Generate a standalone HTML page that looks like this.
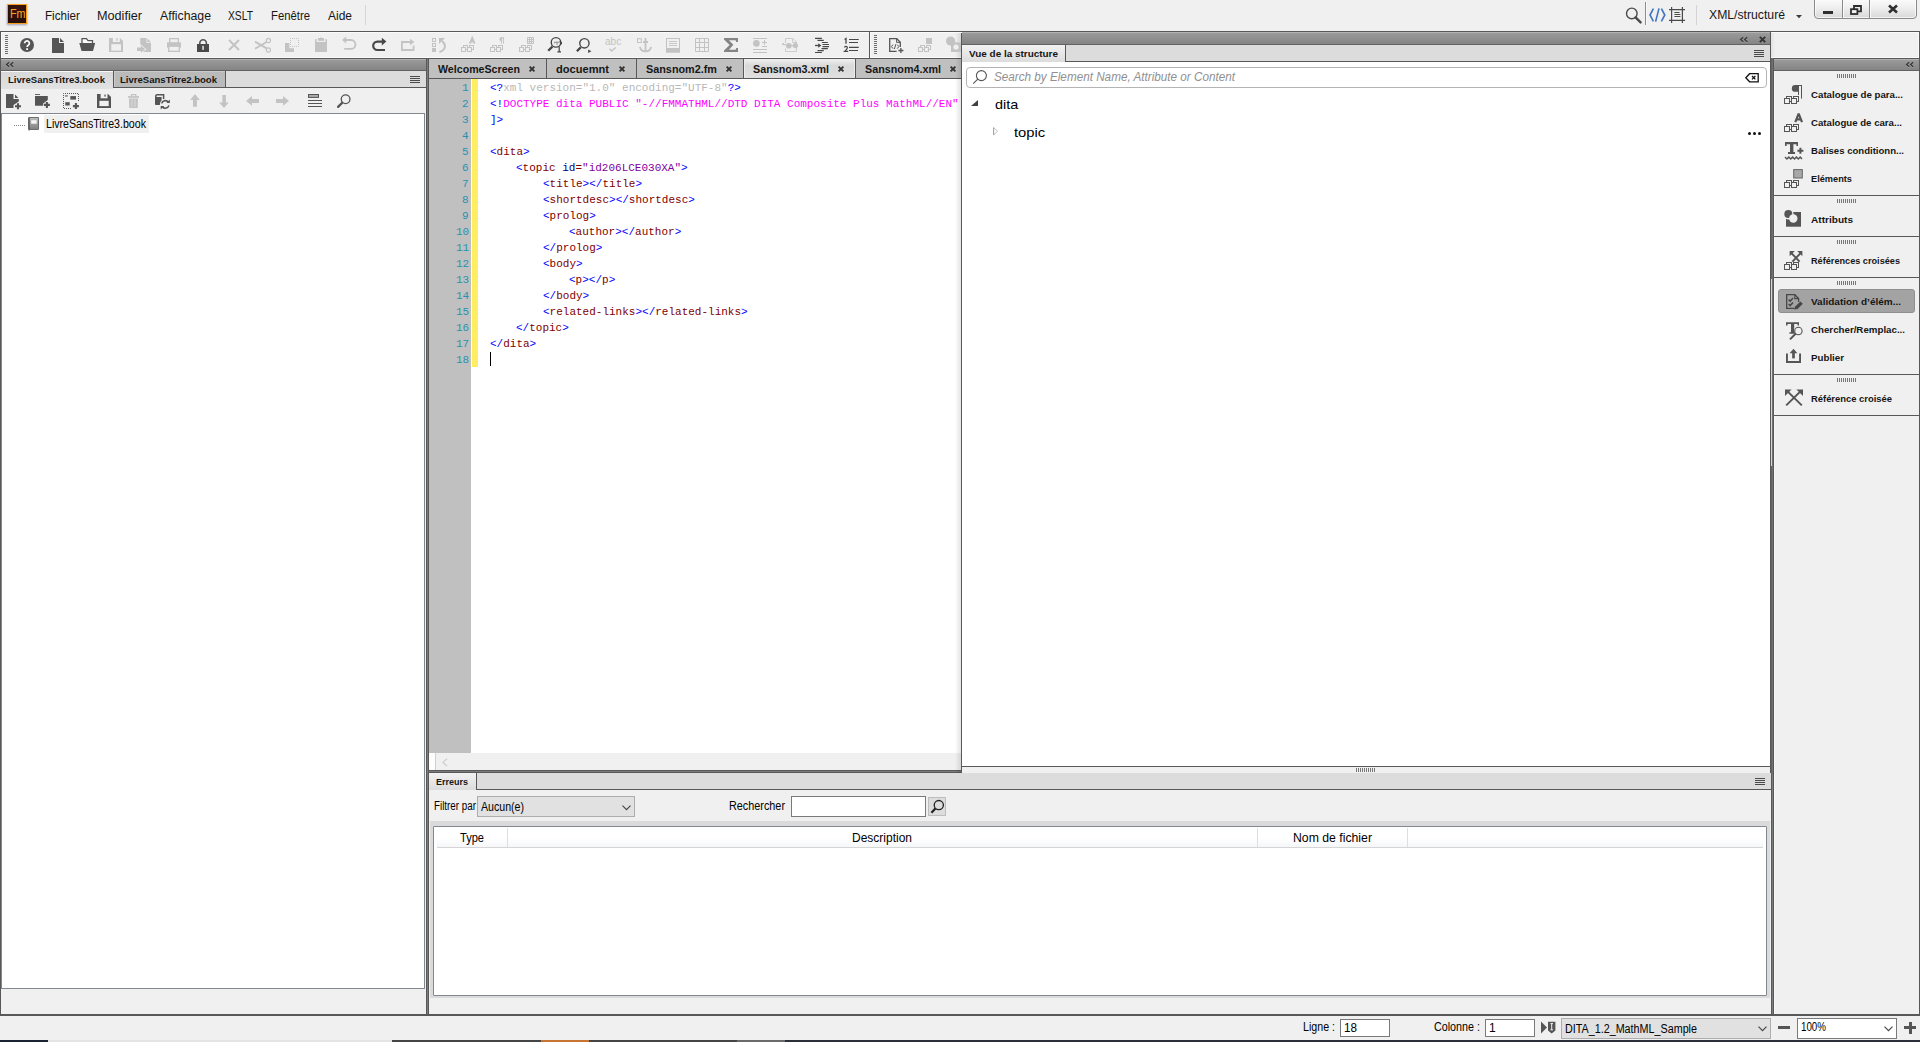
<!DOCTYPE html>
<html lang="fr"><head><meta charset="utf-8"><title>Adobe FrameMaker</title>
<style>
html,body{margin:0;padding:0;}
body{width:1920px;height:1042px;overflow:hidden;background:#f0f0f0;position:relative;font-family:"Liberation Sans",sans-serif;}
body div,body svg{position:absolute;box-sizing:border-box;}
svg{overflow:visible;}
.tx{margin:0;padding:0;}
.code span{position:static;}
</style></head>
<body>
<div style="left:365px;top:5px;width:1px;height:20px;background:#d6d6d6;"></div>
<div style="left:1645px;top:2px;width:1px;height:23px;background:#8c8c8c;"></div>
<div style="left:1646px;top:2px;width:1px;height:23px;background:#fafafa;"></div>
<div style="left:1696px;top:5px;width:1px;height:20px;background:#d4d4d4;"></div>
<div style="left:1814px;top:-3px;width:103px;height:22px;background:linear-gradient(#fdfdfd,#f0f0f0 45%,#d9d9d9);border:1px solid #8a8a8a;border-radius:0 0 4px 4px;box-shadow:inset 0 0 0 1px rgba(255,255,255,.7);"></div>
<div style="left:1842px;top:0px;width:1px;height:18px;background:#8a8a8a;"></div>
<div style="left:1843px;top:0px;width:1px;height:18px;background:#fafafa;"></div>
<div style="left:1869px;top:0px;width:1px;height:18px;background:#8a8a8a;"></div>
<div style="left:1870px;top:0px;width:1px;height:18px;background:#fafafa;"></div>
<div style="left:0px;top:31px;width:1920px;height:1px;background:#585858;"></div>
<div style="left:1px;top:32px;width:960px;height:1px;background:#fbfbfb;"></div>
<div style="left:0px;top:31px;width:1px;height:28px;background:#585858;"></div>
<div style="left:1px;top:32px;width:1px;height:26px;background:#fbfbfb;"></div>
<div style="left:1px;top:57px;width:960px;height:1px;background:#fbfbfb;"></div>
<div style="left:0px;top:58px;width:1920px;height:1px;background:#585858;"></div>
<div style="left:869px;top:32px;width:1px;height:26px;background:#585858;"></div>
<div style="left:870px;top:32px;width:1px;height:26px;background:#fbfbfb;"></div>
<div style="left:5px;top:35px;width:3px;height:19px;background:repeating-linear-gradient(#6e6e6e 0 1px,transparent 1px 2px);"></div>
<div style="left:874px;top:35px;width:3px;height:19px;background:repeating-linear-gradient(#6e6e6e 0 1px,transparent 1px 2px);"></div>
<div style="left:1771px;top:32px;width:149px;height:1px;background:#fbfbfb;"></div>
<div style="left:1771px;top:57px;width:149px;height:1px;background:#fbfbfb;"></div>
<div style="left:1771px;top:33px;width:4px;height:24px;background:linear-gradient(90deg,#e2e2e2,#f0f0f0);"></div>
<div style="left:0px;top:59px;width:1px;height:955px;background:#585858;"></div>
<div style="left:1px;top:59px;width:425px;height:11px;background:linear-gradient(#b2b2b2 0,#b2b2b2 1px,#9a9a9a 1px,#848484 100%);"></div>
<div style="left:0px;top:70px;width:426px;height:1px;background:#626262;"></div>
<div style="left:1px;top:71px;width:425px;height:16px;background:#dcdcdc;"></div>
<div style="left:1px;top:71px;width:112px;height:17.5px;background:linear-gradient(#f8f8f8 0,#f8f8f8 1px,#d8d8d8 1px,#e2e2e2 100%);"></div>
<div style="left:113px;top:71px;width:113px;height:17px;background:#bababa;border:1px solid #585858;border-top:0;box-shadow:inset 1px 1px 0 #cbcbcb;"></div>
<div style="left:226px;top:87px;width:200px;height:1px;background:#585858;"></div>
<div style="left:1px;top:113px;width:424px;height:876px;background:#fff;border:1px solid #828790;"></div>
<div style="left:44px;top:115px;width:105px;height:18px;background:#f0f0f0;"></div>
<div style="left:426px;top:59px;width:1px;height:955px;background:#585858;"></div>
<div style="left:427px;top:59px;width:1px;height:955px;background:#7c7c7c;"></div>
<div style="left:428px;top:59px;width:1px;height:955px;background:#585858;"></div>
<div style="left:429px;top:59px;width:532px;height:19px;background:#c0c0c0;"></div>
<div style="left:546px;top:59px;width:1px;height:19px;background:#585858;"></div>
<div style="left:636px;top:59px;width:1px;height:19px;background:#585858;"></div>
<div style="left:743px;top:59px;width:1px;height:19px;background:#585858;"></div>
<div style="left:855px;top:59px;width:1px;height:19px;background:#585858;"></div>
<div style="left:744px;top:59px;width:111px;height:19px;background:linear-gradient(#f0f0f0,#d9d9d9 35%,#e0e0e0);box-shadow:inset 1px 0 0 #ececec,inset -1px 0 0 #ececec;"></div>
<div style="left:429px;top:78px;width:532px;height:1px;background:#585858;"></div>
<div style="left:429px;top:79px;width:42px;height:674px;background:#c0c0c0;"></div>
<div style="left:471px;top:79px;width:490px;height:674px;background:#fff;"></div>
<div style="left:472px;top:79px;width:6px;height:288px;background:#ffee62;"></div>
<div style="left:490px;top:352px;width:1px;height:14px;background:#000;"></div>
<div style="left:429px;top:753px;width:532px;height:17px;background:#f0f0f0;"></div>
<div style="left:429px;top:753px;width:6px;height:17px;background:#fdfdfd;"></div>
<div style="left:435px;top:753px;width:1px;height:17px;background:#d0d0d0;"></div>
<div style="left:429px;top:770px;width:532px;height:3px;background:#585858;"></div>
<div style="left:429px;top:771px;width:532px;height:1px;background:#7c7c7c;"></div>
<div style="left:955px;top:33px;width:6px;height:740px;background:linear-gradient(90deg,rgba(0,0,0,0),rgba(0,0,0,.11));"></div>
<div style="left:961px;top:31px;width:810px;height:744px;background:#fff;"></div>
<div style="left:961px;top:31px;width:810px;height:1px;background:#585858;"></div>
<div style="left:961px;top:33px;width:1px;height:742px;background:#585858;"></div>
<div style="left:962px;top:32px;width:808px;height:12px;background:linear-gradient(#b2b2b2 0,#b2b2b2 1px,#9a9a9a 1px,#848484 100%);"></div>
<div style="left:962px;top:44px;width:808px;height:1px;background:#626262;"></div>
<div style="left:962px;top:45px;width:808px;height:16px;background:#dcdcdc;"></div>
<div style="left:962px;top:45px;width:103px;height:17px;background:linear-gradient(#f2f2f2,#dcdcdc);"></div>
<div style="left:1065px;top:45px;width:1px;height:17px;background:#585858;"></div>
<div style="left:1065px;top:61px;width:705px;height:1px;background:#585858;"></div>
<div style="left:966px;top:67px;width:801px;height:21px;background:#fff;border:1px solid #b4b4b4;border-radius:4px;"></div>
<div style="left:962px;top:766px;width:808px;height:1px;background:#585858;"></div>
<div style="left:962px;top:767px;width:808px;height:7px;background:#f0f0f0;"></div>
<div style="left:1356px;top:768px;width:19px;height:4px;background:repeating-linear-gradient(90deg,#777 0 1px,transparent 1px 2px);"></div>
<div style="left:961px;top:774px;width:813px;height:1px;background:#585858;"></div>
<div style="left:1770px;top:32px;width:1px;height:743px;background:#585858;"></div>
<div style="left:1771px;top:58px;width:1px;height:717px;background:#636363;"></div>
<div style="left:1772px;top:58px;width:1px;height:717px;background:#727272;"></div>
<div style="left:1773px;top:58px;width:1px;height:717px;background:#585858;"></div>
<div style="left:1771px;top:279px;width:1px;height:187px;background:#d6d6d6;"></div>
<div style="left:1774px;top:59px;width:1px;height:955px;background:#f7f7f7;"></div>
<div style="left:429px;top:773px;width:1342px;height:16px;background:#dcdcdc;"></div>
<div style="left:429px;top:773px;width:47px;height:17px;background:linear-gradient(#f2f2f2,#dcdcdc);"></div>
<div style="left:476px;top:773px;width:1px;height:17px;background:#585858;"></div>
<div style="left:476px;top:789px;width:1295px;height:1px;background:#585858;"></div>
<div style="left:477px;top:796px;width:158px;height:21px;background:#e1e1e1;border:1px solid #adadad;"></div>
<div style="left:791px;top:796px;width:135px;height:21px;background:#fff;border:1px solid #7a7a7a;"></div>
<div style="left:928px;top:797px;width:18px;height:19px;background:#dddddd;border:1px solid #bdbdbd;"></div>
<div style="left:430px;top:821px;width:1340px;height:177px;background:#dadada;"></div>
<div style="left:433px;top:826px;width:1334px;height:170px;background:#fff;border:1px solid #828790;border-radius:1px;"></div>
<div style="left:437px;top:828px;width:1326px;height:19px;background:linear-gradient(#fff,#fff 50%,#f6f7f9);"></div>
<div style="left:437px;top:847px;width:1326px;height:1px;background:#d5d5d5;"></div>
<div style="left:507px;top:828px;width:1px;height:19px;background:#dedede;"></div>
<div style="left:1257px;top:828px;width:1px;height:19px;background:#dedede;"></div>
<div style="left:1407px;top:828px;width:1px;height:19px;background:#dedede;"></div>
<div style="left:1771px;top:775px;width:1px;height:239px;background:#585858;"></div>
<div style="left:1772px;top:775px;width:1px;height:239px;background:#7c7c7c;"></div>
<div style="left:1773px;top:775px;width:1px;height:239px;background:#585858;"></div>
<div style="left:1774px;top:59px;width:146px;height:11px;background:linear-gradient(#b2b2b2 0,#b2b2b2 1px,#9a9a9a 1px,#848484 100%);"></div>
<div style="left:1774px;top:70px;width:146px;height:1px;background:#626262;"></div>
<div style="left:1774px;top:195px;width:146px;height:1px;background:#585858;"></div>
<div style="left:1774px;top:236px;width:146px;height:1px;background:#585858;"></div>
<div style="left:1774px;top:277px;width:146px;height:1px;background:#585858;"></div>
<div style="left:1774px;top:374px;width:146px;height:1px;background:#585858;"></div>
<div style="left:1774px;top:415px;width:146px;height:1px;background:#585858;"></div>
<div style="left:1837px;top:74px;width:19px;height:4px;background:repeating-linear-gradient(90deg,#777 0 1px,transparent 1px 2px);"></div>
<div style="left:1837px;top:199px;width:19px;height:4px;background:repeating-linear-gradient(90deg,#777 0 1px,transparent 1px 2px);"></div>
<div style="left:1837px;top:240px;width:19px;height:4px;background:repeating-linear-gradient(90deg,#777 0 1px,transparent 1px 2px);"></div>
<div style="left:1837px;top:281px;width:19px;height:4px;background:repeating-linear-gradient(90deg,#777 0 1px,transparent 1px 2px);"></div>
<div style="left:1837px;top:378px;width:19px;height:4px;background:repeating-linear-gradient(90deg,#777 0 1px,transparent 1px 2px);"></div>
<div style="left:1778px;top:289px;width:137px;height:24px;background:#a3a3a3;border:1px solid #8f8f8f;border-radius:3px;"></div>
<div style="left:1919px;top:31px;width:1px;height:985px;background:#585858;"></div>
<div style="left:1918px;top:32px;width:1px;height:26px;background:#fbfbfb;"></div>
<div style="left:0px;top:1014px;width:1920px;height:2px;background:#585858;"></div>
<div style="left:1340px;top:1019px;width:50px;height:18px;background:#fff;border:1px solid #7a7a7a;"></div>
<div style="left:1485px;top:1019px;width:50px;height:18px;background:#fff;border:1px solid #7a7a7a;"></div>
<div style="left:1561px;top:1018px;width:210px;height:21px;background:#e1e1e1;border:1px solid #adadad;"></div>
<div style="left:1797px;top:1018px;width:100px;height:21px;background:#fff;border:1px solid #7a7a7a;"></div>
<div style="left:1778px;top:1026px;width:12px;height:3px;background:#555;"></div>
<div style="left:1904px;top:1026px;width:12px;height:3px;background:#555;"></div>
<div style="left:1908.5px;top:1022px;width:3px;height:12px;background:#555;"></div>
<div style="left:0px;top:1040px;width:1920px;height:2px;background:#1b2434;"></div>
<div style="left:48px;top:1040px;width:344px;height:2px;background:#e4e4e4;"></div>
<div style="left:392px;top:1040px;width:149px;height:2px;background:#454545;"></div>
<div style="left:541px;top:1040px;width:48px;height:2px;background:#c87533;"></div>
<div style="left:589px;top:1040px;width:148px;height:2px;background:#454545;"></div>
<div style="left:737px;top:1040px;width:48px;height:2px;background:#6a6a6a;"></div>
<div style="left:785px;top:1040px;width:1135px;height:2px;background:#2a2f3a;"></div>
<div class="tx" id="t1" style="left:45px;top:9.84px;font:400 12px/12px 'Liberation Sans',sans-serif;color:#161616;white-space:pre;transform-origin:0 0;transform:scaleX(0.9718);">Fichier</div>
<div class="tx" id="t2" style="left:97px;top:9.84px;font:400 12px/12px 'Liberation Sans',sans-serif;color:#161616;white-space:pre;transform-origin:0 0;transform:scaleX(1.0542);">Modifier</div>
<div class="tx" id="t3" style="left:160px;top:9.84px;font:400 12px/12px 'Liberation Sans',sans-serif;color:#161616;white-space:pre;transform-origin:0 0;transform:scaleX(1.0235);">Affichage</div>
<div class="tx" id="t4" style="left:228px;top:9.84px;font:400 12px/12px 'Liberation Sans',sans-serif;color:#161616;white-space:pre;transform-origin:0 0;transform:scaleX(0.8584);">XSLT</div>
<div class="tx" id="t5" style="left:271px;top:9.84px;font:400 12px/12px 'Liberation Sans',sans-serif;color:#161616;white-space:pre;transform-origin:0 0;transform:scaleX(0.9430);">Fenêtre</div>
<div class="tx" id="t6" style="left:328px;top:9.84px;font:400 12px/12px 'Liberation Sans',sans-serif;color:#161616;white-space:pre;transform-origin:0 0;transform:scaleX(0.9987);">Aide</div>
<div class="tx" id="t7" style="left:1709px;top:8.84px;font:400 12px/12px 'Liberation Sans',sans-serif;color:#161616;white-space:pre;transform-origin:0 0;transform:scaleX(1.0174);">XML/structuré</div>
<div class="tx" id="t8" style="left:8px;top:74.87px;font:700 9.6px/9.6px 'Liberation Sans',sans-serif;color:#161616;white-space:pre;transform-origin:0 0;transform:scaleX(0.9958);">LivreSansTitre3.book</div>
<div class="tx" id="t9" style="left:120px;top:74.87px;font:700 9.6px/9.6px 'Liberation Sans',sans-serif;color:#161616;white-space:pre;transform-origin:0 0;transform:scaleX(0.9958);">LivreSansTitre2.book</div>
<div class="tx" id="t10" style="left:46px;top:117.84px;font:400 12px/12px 'Liberation Sans',sans-serif;color:#000;white-space:pre;transform-origin:0 0;transform:scaleX(0.8853);">LivreSansTitre3.book</div>
<div class="tx" id="t11" style="left:438px;top:63.69px;font:700 11px/11px 'Liberation Sans',sans-serif;color:#161616;white-space:pre;transform-origin:0 0;transform:scaleX(0.9670);">WelcomeScreen</div>
<div class="tx" id="t12" style="left:556px;top:63.69px;font:700 11px/11px 'Liberation Sans',sans-serif;color:#161616;white-space:pre;transform-origin:0 0;transform:scaleX(1.0083);">docuemnt</div>
<div class="tx" id="t13" style="left:646px;top:63.69px;font:700 11px/11px 'Liberation Sans',sans-serif;color:#161616;white-space:pre;transform-origin:0 0;transform:scaleX(0.9842);">Sansnom2.fm</div>
<div class="tx" id="t14" style="left:753px;top:63.69px;font:700 11px/11px 'Liberation Sans',sans-serif;color:#161616;white-space:pre;transform-origin:0 0;transform:scaleX(0.9789);">Sansnom3.xml</div>
<div class="tx" id="t15" style="left:865px;top:63.69px;font:700 11px/11px 'Liberation Sans',sans-serif;color:#161616;white-space:pre;transform-origin:0 0;transform:scaleX(0.9789);">Sansnom4.xml</div>
<div class="tx" style="left:462.4px;top:82.18px;font:400 11.5px/11.5px 'Liberation Mono',monospace;color:#2b91af;white-space:pre;transform-origin:0 0;transform:scaleX(0.9565);">1</div>
<div class="tx code" style="left:490.0px;top:82.18px;width:492.4px;height:16px;overflow:hidden;font:400 11.5px/11.5px 'Liberation Mono',monospace;white-space:pre;transform-origin:0 0;transform:scaleX(0.9565);"><span style="color:#0000ff">&lt;?</span><span style="color:#b8b8b8">xml version=&quot;1.0&quot; encoding=&quot;UTF-8&quot;</span><span style="color:#0000ff">?&gt;</span></div>
<div class="tx" style="left:462.4px;top:98.18px;font:400 11.5px/11.5px 'Liberation Mono',monospace;color:#2b91af;white-space:pre;transform-origin:0 0;transform:scaleX(0.9565);">2</div>
<div class="tx code" style="left:490.0px;top:98.18px;width:492.4px;height:16px;overflow:hidden;font:400 11.5px/11.5px 'Liberation Mono',monospace;white-space:pre;transform-origin:0 0;transform:scaleX(0.9565);"><span style="color:#0000ff">&lt;!</span><span style="color:#ff00ff">DOCTYPE dita PUBLIC &quot;-//FMMATHML//DTD DITA Composite Plus MathML//EN&quot;</span></div>
<div class="tx" style="left:462.4px;top:114.18px;font:400 11.5px/11.5px 'Liberation Mono',monospace;color:#2b91af;white-space:pre;transform-origin:0 0;transform:scaleX(0.9565);">3</div>
<div class="tx code" style="left:490.0px;top:114.18px;width:492.4px;height:16px;overflow:hidden;font:400 11.5px/11.5px 'Liberation Mono',monospace;white-space:pre;transform-origin:0 0;transform:scaleX(0.9565);"><span style="color:#0000ff">]&gt;</span></div>
<div class="tx" style="left:462.4px;top:130.18px;font:400 11.5px/11.5px 'Liberation Mono',monospace;color:#2b91af;white-space:pre;transform-origin:0 0;transform:scaleX(0.9565);">4</div>
<div class="tx" style="left:462.4px;top:146.18px;font:400 11.5px/11.5px 'Liberation Mono',monospace;color:#2b91af;white-space:pre;transform-origin:0 0;transform:scaleX(0.9565);">5</div>
<div class="tx code" style="left:490.0px;top:146.18px;width:492.4px;height:16px;overflow:hidden;font:400 11.5px/11.5px 'Liberation Mono',monospace;white-space:pre;transform-origin:0 0;transform:scaleX(0.9565);"><span style="color:#0000ff">&lt;</span><span style="color:#800000">dita</span><span style="color:#0000ff">&gt;</span></div>
<div class="tx" style="left:462.4px;top:162.18px;font:400 11.5px/11.5px 'Liberation Mono',monospace;color:#2b91af;white-space:pre;transform-origin:0 0;transform:scaleX(0.9565);">6</div>
<div class="tx code" style="left:516.4px;top:162.18px;width:464.8px;height:16px;overflow:hidden;font:400 11.5px/11.5px 'Liberation Mono',monospace;white-space:pre;transform-origin:0 0;transform:scaleX(0.9565);"><span style="color:#0000ff">&lt;</span><span style="color:#800000">topic</span><span style="color:#800000"> </span><span style="color:#000080">id</span><span style="color:#800000">=</span><span style="color:#8000a0">&quot;id206LCE030XA&quot;</span><span style="color:#0000ff">&gt;</span></div>
<div class="tx" style="left:462.4px;top:178.18px;font:400 11.5px/11.5px 'Liberation Mono',monospace;color:#2b91af;white-space:pre;transform-origin:0 0;transform:scaleX(0.9565);">7</div>
<div class="tx code" style="left:542.8px;top:178.18px;width:437.2px;height:16px;overflow:hidden;font:400 11.5px/11.5px 'Liberation Mono',monospace;white-space:pre;transform-origin:0 0;transform:scaleX(0.9565);"><span style="color:#0000ff">&lt;</span><span style="color:#800000">title</span><span style="color:#0000ff">&gt;</span><span style="color:#0000ff">&lt;/</span><span style="color:#800000">title</span><span style="color:#0000ff">&gt;</span></div>
<div class="tx" style="left:462.4px;top:194.18px;font:400 11.5px/11.5px 'Liberation Mono',monospace;color:#2b91af;white-space:pre;transform-origin:0 0;transform:scaleX(0.9565);">8</div>
<div class="tx code" style="left:542.8px;top:194.18px;width:437.2px;height:16px;overflow:hidden;font:400 11.5px/11.5px 'Liberation Mono',monospace;white-space:pre;transform-origin:0 0;transform:scaleX(0.9565);"><span style="color:#0000ff">&lt;</span><span style="color:#800000">shortdesc</span><span style="color:#0000ff">&gt;</span><span style="color:#0000ff">&lt;/</span><span style="color:#800000">shortdesc</span><span style="color:#0000ff">&gt;</span></div>
<div class="tx" style="left:462.4px;top:210.18px;font:400 11.5px/11.5px 'Liberation Mono',monospace;color:#2b91af;white-space:pre;transform-origin:0 0;transform:scaleX(0.9565);">9</div>
<div class="tx code" style="left:542.8px;top:210.18px;width:437.2px;height:16px;overflow:hidden;font:400 11.5px/11.5px 'Liberation Mono',monospace;white-space:pre;transform-origin:0 0;transform:scaleX(0.9565);"><span style="color:#0000ff">&lt;</span><span style="color:#800000">prolog</span><span style="color:#0000ff">&gt;</span></div>
<div class="tx" style="left:455.8px;top:226.18px;font:400 11.5px/11.5px 'Liberation Mono',monospace;color:#2b91af;white-space:pre;transform-origin:0 0;transform:scaleX(0.9565);">10</div>
<div class="tx code" style="left:569.2px;top:226.18px;width:409.6px;height:16px;overflow:hidden;font:400 11.5px/11.5px 'Liberation Mono',monospace;white-space:pre;transform-origin:0 0;transform:scaleX(0.9565);"><span style="color:#0000ff">&lt;</span><span style="color:#800000">author</span><span style="color:#0000ff">&gt;</span><span style="color:#0000ff">&lt;/</span><span style="color:#800000">author</span><span style="color:#0000ff">&gt;</span></div>
<div class="tx" style="left:455.8px;top:242.18px;font:400 11.5px/11.5px 'Liberation Mono',monospace;color:#2b91af;white-space:pre;transform-origin:0 0;transform:scaleX(0.9565);">11</div>
<div class="tx code" style="left:542.8px;top:242.18px;width:437.2px;height:16px;overflow:hidden;font:400 11.5px/11.5px 'Liberation Mono',monospace;white-space:pre;transform-origin:0 0;transform:scaleX(0.9565);"><span style="color:#0000ff">&lt;/</span><span style="color:#800000">prolog</span><span style="color:#0000ff">&gt;</span></div>
<div class="tx" style="left:455.8px;top:258.18px;font:400 11.5px/11.5px 'Liberation Mono',monospace;color:#2b91af;white-space:pre;transform-origin:0 0;transform:scaleX(0.9565);">12</div>
<div class="tx code" style="left:542.8px;top:258.18px;width:437.2px;height:16px;overflow:hidden;font:400 11.5px/11.5px 'Liberation Mono',monospace;white-space:pre;transform-origin:0 0;transform:scaleX(0.9565);"><span style="color:#0000ff">&lt;</span><span style="color:#800000">body</span><span style="color:#0000ff">&gt;</span></div>
<div class="tx" style="left:455.8px;top:274.18px;font:400 11.5px/11.5px 'Liberation Mono',monospace;color:#2b91af;white-space:pre;transform-origin:0 0;transform:scaleX(0.9565);">13</div>
<div class="tx code" style="left:569.2px;top:274.18px;width:409.6px;height:16px;overflow:hidden;font:400 11.5px/11.5px 'Liberation Mono',monospace;white-space:pre;transform-origin:0 0;transform:scaleX(0.9565);"><span style="color:#0000ff">&lt;</span><span style="color:#800000">p</span><span style="color:#0000ff">&gt;</span><span style="color:#0000ff">&lt;/</span><span style="color:#800000">p</span><span style="color:#0000ff">&gt;</span></div>
<div class="tx" style="left:455.8px;top:290.18px;font:400 11.5px/11.5px 'Liberation Mono',monospace;color:#2b91af;white-space:pre;transform-origin:0 0;transform:scaleX(0.9565);">14</div>
<div class="tx code" style="left:542.8px;top:290.18px;width:437.2px;height:16px;overflow:hidden;font:400 11.5px/11.5px 'Liberation Mono',monospace;white-space:pre;transform-origin:0 0;transform:scaleX(0.9565);"><span style="color:#0000ff">&lt;/</span><span style="color:#800000">body</span><span style="color:#0000ff">&gt;</span></div>
<div class="tx" style="left:455.8px;top:306.18px;font:400 11.5px/11.5px 'Liberation Mono',monospace;color:#2b91af;white-space:pre;transform-origin:0 0;transform:scaleX(0.9565);">15</div>
<div class="tx code" style="left:542.8px;top:306.18px;width:437.2px;height:16px;overflow:hidden;font:400 11.5px/11.5px 'Liberation Mono',monospace;white-space:pre;transform-origin:0 0;transform:scaleX(0.9565);"><span style="color:#0000ff">&lt;</span><span style="color:#800000">related-links</span><span style="color:#0000ff">&gt;</span><span style="color:#0000ff">&lt;/</span><span style="color:#800000">related-links</span><span style="color:#0000ff">&gt;</span></div>
<div class="tx" style="left:455.8px;top:322.18px;font:400 11.5px/11.5px 'Liberation Mono',monospace;color:#2b91af;white-space:pre;transform-origin:0 0;transform:scaleX(0.9565);">16</div>
<div class="tx code" style="left:516.4px;top:322.18px;width:464.8px;height:16px;overflow:hidden;font:400 11.5px/11.5px 'Liberation Mono',monospace;white-space:pre;transform-origin:0 0;transform:scaleX(0.9565);"><span style="color:#0000ff">&lt;/</span><span style="color:#800000">topic</span><span style="color:#0000ff">&gt;</span></div>
<div class="tx" style="left:455.8px;top:338.18px;font:400 11.5px/11.5px 'Liberation Mono',monospace;color:#2b91af;white-space:pre;transform-origin:0 0;transform:scaleX(0.9565);">17</div>
<div class="tx code" style="left:490.0px;top:338.18px;width:492.4px;height:16px;overflow:hidden;font:400 11.5px/11.5px 'Liberation Mono',monospace;white-space:pre;transform-origin:0 0;transform:scaleX(0.9565);"><span style="color:#0000ff">&lt;/</span><span style="color:#800000">dita</span><span style="color:#0000ff">&gt;</span></div>
<div class="tx" style="left:455.8px;top:354.18px;font:400 11.5px/11.5px 'Liberation Mono',monospace;color:#2b91af;white-space:pre;transform-origin:0 0;transform:scaleX(0.9565);">18</div>
<div class="tx" id="t16" style="left:969px;top:48.87px;font:700 9.6px/9.6px 'Liberation Sans',sans-serif;color:#161616;white-space:pre;transform-origin:0 0;transform:scaleX(1.0347);">Vue de la structure</div>
<div class="tx" id="t17" style="left:994px;top:71.14px;font:italic 400 12px/12px 'Liberation Sans',sans-serif;color:#909090;white-space:pre;transform-origin:0 0;transform:scaleX(0.9756);">Search by Element Name, Attribute or Content</div>
<div class="tx" id="t18" style="left:995px;top:97.57px;font:400 13.5px/13.5px 'Liberation Sans',sans-serif;color:#000;white-space:pre;transform-origin:0 0;transform:scaleX(1.0697);">dita</div>
<div class="tx" id="t19" style="left:1014px;top:125.57px;font:400 13.5px/13.5px 'Liberation Sans',sans-serif;color:#000;white-space:pre;transform-origin:0 0;transform:scaleX(1.0935);">topic</div>
<div class="tx" id="t20" style="left:436px;top:776.87px;font:700 9.6px/9.6px 'Liberation Sans',sans-serif;color:#161616;white-space:pre;transform-origin:0 0;transform:scaleX(0.9373);">Erreurs</div>
<div class="tx" id="t21" style="left:434px;top:799.84px;font:400 12px/12px 'Liberation Sans',sans-serif;color:#000;white-space:pre;transform-origin:0 0;transform:scaleX(0.8180);">Filtrer par</div>
<div class="tx" id="t22" style="left:481px;top:800.84px;font:400 12px/12px 'Liberation Sans',sans-serif;color:#000;white-space:pre;transform-origin:0 0;transform:scaleX(0.8829);">Aucun(e)</div>
<div class="tx" id="t23" style="left:729px;top:799.84px;font:400 12px/12px 'Liberation Sans',sans-serif;color:#000;white-space:pre;transform-origin:0 0;transform:scaleX(0.9028);">Rechercher</div>
<div class="tx" id="t24" style="left:460px;top:831.84px;font:400 12px/12px 'Liberation Sans',sans-serif;color:#000;white-space:pre;transform-origin:0 0;transform:scaleX(0.9225);">Type</div>
<div class="tx" id="t25" style="left:852px;top:831.84px;font:400 12px/12px 'Liberation Sans',sans-serif;color:#000;white-space:pre;transform-origin:0 0;transform:scaleX(0.9995);">Description</div>
<div class="tx" id="t26" style="left:1293px;top:831.84px;font:400 12px/12px 'Liberation Sans',sans-serif;color:#000;white-space:pre;transform-origin:0 0;transform:scaleX(1.0210);">Nom de fichier</div>
<div class="tx" id="t27" style="left:1811px;top:89.87px;font:700 9.6px/9.6px 'Liberation Sans',sans-serif;color:#161616;white-space:pre;transform-origin:0 0;transform:scaleX(1.0091);">Catalogue de para...</div>
<div class="tx" id="t28" style="left:1811px;top:117.87px;font:700 9.6px/9.6px 'Liberation Sans',sans-serif;color:#161616;white-space:pre;transform-origin:0 0;transform:scaleX(1.0040);">Catalogue de cara...</div>
<div class="tx" id="t29" style="left:1811px;top:145.87px;font:700 9.6px/9.6px 'Liberation Sans',sans-serif;color:#161616;white-space:pre;transform-origin:0 0;transform:scaleX(0.9968);">Balises conditionn...</div>
<div class="tx" id="t30" style="left:1811px;top:173.87px;font:700 9.6px/9.6px 'Liberation Sans',sans-serif;color:#161616;white-space:pre;transform-origin:0 0;transform:scaleX(0.9608);">Eléments</div>
<div class="tx" id="t31" style="left:1811px;top:214.87px;font:700 9.6px/9.6px 'Liberation Sans',sans-serif;color:#161616;white-space:pre;transform-origin:0 0;transform:scaleX(1.0508);">Attributs</div>
<div class="tx" id="t32" style="left:1811px;top:255.87px;font:700 9.6px/9.6px 'Liberation Sans',sans-serif;color:#161616;white-space:pre;transform-origin:0 0;transform:scaleX(0.9535);">Références croisées</div>
<div class="tx" id="t33" style="left:1811px;top:296.87px;font:700 9.6px/9.6px 'Liberation Sans',sans-serif;color:#161616;white-space:pre;transform-origin:0 0;transform:scaleX(1.0420);">Validation d’élém...</div>
<div class="tx" id="t34" style="left:1811px;top:324.87px;font:700 9.6px/9.6px 'Liberation Sans',sans-serif;color:#161616;white-space:pre;transform-origin:0 0;transform:scaleX(1.0131);">Chercher/Remplac...</div>
<div class="tx" id="t35" style="left:1811px;top:352.87px;font:700 9.6px/9.6px 'Liberation Sans',sans-serif;color:#161616;white-space:pre;transform-origin:0 0;transform:scaleX(1.0144);">Publier</div>
<div class="tx" id="t36" style="left:1811px;top:393.87px;font:700 9.6px/9.6px 'Liberation Sans',sans-serif;color:#161616;white-space:pre;transform-origin:0 0;transform:scaleX(0.9798);">Référence croisée</div>
<div class="tx" id="t37" style="left:1303px;top:1020.84px;font:400 12px/12px 'Liberation Sans',sans-serif;color:#000;white-space:pre;transform-origin:0 0;transform:scaleX(0.8881);">Ligne :</div>
<div class="tx" id="t38" style="left:1344px;top:1021.84px;font:400 12px/12px 'Liberation Sans',sans-serif;color:#000;white-space:pre;transform-origin:0 0;transform:scaleX(0.9731);">18</div>
<div class="tx" id="t39" style="left:1434px;top:1020.84px;font:400 12px/12px 'Liberation Sans',sans-serif;color:#000;white-space:pre;transform-origin:0 0;transform:scaleX(0.8954);">Colonne :</div>
<div class="tx" id="t40" style="left:1489px;top:1021.84px;font:400 12px/12px 'Liberation Sans',sans-serif;color:#000;white-space:pre;transform-origin:0 0;transform:scaleX(1.0000);">1</div>
<div class="tx" id="t41" style="left:1565px;top:1022.84px;font:400 12px/12px 'Liberation Sans',sans-serif;color:#000;white-space:pre;transform-origin:0 0;transform:scaleX(0.8968);">DITA_1.2_MathML_Sample</div>
<div class="tx" id="t42" style="left:1801px;top:1021.34px;font:400 12px/12px 'Liberation Sans',sans-serif;color:#000;white-space:pre;transform-origin:0 0;transform:scaleX(0.8142);">100%</div>
<div style="left:7px;top:4px;width:20px;height:20px;background:radial-gradient(circle at 50% 20%,#3a1610,#260c08);border:1px solid #f7a022;box-shadow:0 1px 2px rgba(0,0,60,.35);"></div>
<div class="tx" id="logo" style="left:9.8px;top:8.44px;font:400 12px/12px 'Liberation Sans',sans-serif;color:#f9a526;white-space:pre;transform-origin:0 0;transform:scaleX(0.9003);">Fm</div>
<svg style="left:20px;top:38px;" width="14" height="14" viewBox="0 0 14 14"><circle cx="7" cy="7" r="7" fill="#555555"/><path d="M4.6 5.2 a2.4 2.3 0 1 1 3.6 2 q-1.1 .7 -1.1 1.9" fill="none" stroke="#fff" stroke-width="1.7"/><rect x="6.2" y="10.2" width="1.8" height="1.8" fill="#fff"/></svg>
<svg style="left:52px;top:38px;" width="12" height="15" viewBox="0 0 12 15"><path d="M0 0H7V5H12V15H0Z" fill="#555555"/><path d="M8 0L12 4H8Z" fill="#555555"/></svg>
<svg style="left:79px;top:38px;" width="17" height="13" viewBox="0 0 17 13"><path d="M3 5V.7H7.5L9 2.6H13.5V5" fill="#fff" stroke="#555555" stroke-width="1.3"/><path d="M.3 5H16.2L14 13H2.5Z" fill="#555555"/></svg>
<svg style="left:109px;top:38px;" width="14" height="14" viewBox="0 0 14 14"><path d="M0 0H11L14 3V14H0Z" fill="#c3c3c3"/><rect x="2.3" y="6.2" width="9.7" height="6.5" fill="#f0f0f0"/><rect x="3.9" y="0" width="6.9" height="4" fill="#f0f0f0"/><rect x="7.25" y="0" width="1.3" height="2.8" fill="#c3c3c3"/></svg>
<svg style="left:137px;top:38px;" width="15" height="16" viewBox="0 0 15 16"><path d="M3.3 0H9.5V5H14V14H3.3Z" fill="#c3c3c3"/><path d="M10.4 .6L14 4.2H10.4Z" fill="#c3c3c3"/><path d="M0 9.6H4V7.8L8.2 11.3 4 14.8V12.9H0Z" fill="#c3c3c3" stroke="#f0f0f0" stroke-width="1.6" paint-order="stroke"/></svg>
<svg style="left:167px;top:38px;" width="14" height="14" viewBox="0 0 14 14"><rect x="2.65" y=".65" width="8.7" height="4.4" fill="none" stroke="#c3c3c3" stroke-width="1.3"/><rect x="0" y="4.4" width="14" height="5.2" fill="#c3c3c3"/><rect x="1.65" y="8.2" width="10.7" height="5.15" fill="#f0f0f0" stroke="#c3c3c3" stroke-width="1.3"/></svg>
<svg style="left:197px;top:39px;" width="12" height="14" viewBox="0 0 12 14"><path d="M2.8 6V4.2A3.3 3.45 0 0 1 9.4 4.2V6" fill="none" stroke="#555555" stroke-width="1.6"/><rect x="0" y="5" width="12" height="8" fill="#4a4a4a"/><rect x="5.3" y="6.8" width="1.5" height="4.1" fill="#e6e6e6"/></svg>
<svg style="left:228px;top:39px;" width="12" height="12" viewBox="0 0 12 12"><path d="M1 1L11 11M11 1L1 11" stroke="#c3c3c3" stroke-width="2" fill="none"/></svg>
<svg style="left:255px;top:38px;" width="17" height="15" viewBox="0 0 17 15"><path d="M0 3.6L11.6 10.4M0 10.8L11.6 4" stroke="#c3c3c3" stroke-width="1.8" fill="none"/><circle cx="13.4" cy="2.5" r="2.1" fill="none" stroke="#c3c3c3" stroke-width="1.2"/><circle cx="13.4" cy="12" r="2.1" fill="none" stroke="#c3c3c3" stroke-width="1.2"/></svg>
<svg style="left:285px;top:38px;" width="14" height="14" viewBox="0 0 14 14"><path d="M0 5H4.3V10.2H9V14H0Z" fill="#c3c3c3"/><rect x="5.5" y=".5" width="8" height="8" fill="none" stroke="#c3c3c3" stroke-width="1" stroke-dasharray="1 1" stroke-dashoffset=".5"/></svg>
<svg style="left:315px;top:37px;" width="12" height="15" viewBox="0 0 12 15"><path d="M0 2.2H12V15H0Z" fill="#c3c3c3"/><rect x="1.6" y="2.2" width="8.8" height="2.7" fill="#f0f0f0"/><rect x="3.1" y="1" width="5.9" height="2.8" fill="#c3c3c3"/><rect x="5.4" y=".2" width="1.2" height="1" fill="#c3c3c3"/></svg>
<svg style="left:342px;top:36px;" width="14" height="15" viewBox="0 0 14 15"><path d="M0 4L4.2 .4V7.6Z" fill="#c3c3c3"/><path d="M4 4H9A4.45 4.45 0 0 1 9 12.9H2.2" fill="none" stroke="#c3c3c3" stroke-width="1.8"/></svg>
<svg style="left:372px;top:38px;" width="15" height="13" viewBox="0 0 15 13"><path d="M10.5 3.6H5.4A4.2 4.2 0 0 0 5.4 12H13" fill="none" stroke="#484848" stroke-width="2.2"/><path d="M9.8 -.2L14.4 3.6 9.8 7.4Z" fill="#484848"/></svg>
<svg style="left:401px;top:39px;" width="14" height="12" viewBox="0 0 14 12"><path d="M9 3H.9V11H12.6V6.5" fill="none" stroke="#c3c3c3" stroke-width="1.8"/><path d="M9 -.2L13.4 3 9 6.2Z" fill="#c3c3c3"/></svg>
<svg style="left:432px;top:38px;" width="14" height="14" viewBox="0 0 14 14"><rect x=".5" y=".5" width="3" height="3" fill="none" stroke="#c3c3c3"/><rect x=".5" y="5.5" width="3" height="3" fill="none" stroke="#c3c3c3"/><rect x="0" y="10" width="4" height="4" fill="#c3c3c3"/><path d="M10 3Q15 7.5 11.6 11.6 10 13.4 7.4 14" fill="none" stroke="#c3c3c3" stroke-width="2"/><path d="M7 0H13L7 6Z" fill="#c3c3c3"/></svg>
<svg style="left:461px;top:37px;" width="15" height="16" viewBox="0 0 15 16"><rect x="2.5" y="8.5" width="4" height="4" fill="none" stroke="#c3c3c3" stroke-width="1"/><rect x="0.5" y="10.5" width="4" height="4" fill="#f0f0f0" stroke="#c3c3c3" stroke-width="1"/><rect x="8.5" y="8.5" width="4" height="4" fill="none" stroke="#c3c3c3" stroke-width="1"/><rect x="6.5" y="10.5" width="4" height="4" fill="#f0f0f0" stroke="#c3c3c3" stroke-width="1"/><rect x="5" y="12" width="1" height="1" fill="#c3c3c3"/><path d="M8.8 6.6L11.2 .8 13.6 6.6M9.6 4.5H12.8" fill="none" stroke="#c3c3c3" stroke-width="1.8"/></svg>
<svg style="left:490px;top:37px;" width="15" height="16" viewBox="0 0 15 16"><rect x="2.5" y="8.5" width="4" height="4" fill="none" stroke="#c3c3c3" stroke-width="1"/><rect x="0.5" y="10.5" width="4" height="4" fill="#f0f0f0" stroke="#c3c3c3" stroke-width="1"/><rect x="8.5" y="8.5" width="4" height="4" fill="none" stroke="#c3c3c3" stroke-width="1"/><rect x="6.5" y="10.5" width="4" height="4" fill="#f0f0f0" stroke="#c3c3c3" stroke-width="1"/><rect x="5" y="12" width="1" height="1" fill="#c3c3c3"/><path d="M11.4 6.6V.8M13.4 6.6V.8M14.2 .8H10.6" fill="none" stroke="#c3c3c3" stroke-width="1"/><path d="M11.4 .3A1.9 1.9 0 0 0 11.4 4.1Z" fill="#c3c3c3"/></svg>
<svg style="left:519px;top:37px;" width="16" height="16" viewBox="0 0 16 16"><rect x="2.5" y="8.5" width="4" height="4" fill="none" stroke="#c3c3c3" stroke-width="1"/><rect x="0.5" y="10.5" width="4" height="4" fill="#f0f0f0" stroke="#c3c3c3" stroke-width="1"/><rect x="8.5" y="8.5" width="4" height="4" fill="none" stroke="#c3c3c3" stroke-width="1"/><rect x="6.5" y="10.5" width="4" height="4" fill="#f0f0f0" stroke="#c3c3c3" stroke-width="1"/><rect x="5" y="12" width="1" height="1" fill="#c3c3c3"/><path d="M8.5 .5H14.5V6.5H8.5ZM10.5 .5V6.5M12.5 .5V6.5M8.5 2.5H14.5M8.5 4.5H14.5" fill="none" stroke="#c3c3c3" stroke-width="1"/></svg>
<svg style="left:547px;top:37px;" width="17" height="16" viewBox="0 0 17 16"><circle cx="9" cy="5.4" r="4.75" fill="none" stroke="#464646" stroke-width="1.4"/><path d="M5.4 9.6L1.2 13.8" stroke="#464646" stroke-width="2.3" fill="none"/><path d="M7.4 5.2H12.4M7.4 5.2V6.4M10 5.2V8" stroke="#8a8a8a" stroke-width="1" fill="none"/><path d="M12.6 4.4L14.4 5.6V7.2M12.2 9.4V14.6M10.4 14.8H14" stroke="#464646" stroke-width="1.2" fill="none"/></svg>
<svg style="left:576px;top:38px;" width="16" height="16" viewBox="0 0 16 16"><circle cx="8.4" cy="5.3" r="4.65" fill="none" stroke="#464646" stroke-width="1.4"/><path d="M4.8 9.2L.9 13.3" stroke="#464646" stroke-width="2.3" fill="none"/><path d="M12.2 11.4L15.4 13.2 12.2 15Z" fill="#464646"/></svg>
<div class="tx" id="abc" style="left:604.7px;top:36.49px;font:400 11px/11px 'Liberation Sans',sans-serif;color:#c3c3c3;white-space:pre;transform-origin:0 0;transform:scaleX(0.9183);">abc</div>
<svg style="left:609px;top:47px;" width="8" height="5" viewBox="0 0 8 5"><path d="M.6 1.8L2.6 4 6.8 .5" fill="none" stroke="#c3c3c3" stroke-width="1.3"/></svg>
<svg style="left:636px;top:38px;" width="16" height="15" viewBox="0 0 16 15"><rect x="1.5" y=".7" width="3.8" height="3.8" fill="none" stroke="#c3c3c3"/><path d="M9.5 0V13M7 4H12M4 8.8Q4.6 13.3 9.5 13.3 14.4 13.3 15 8.8" fill="none" stroke="#c3c3c3" stroke-width="1.8"/></svg>
<svg style="left:666px;top:38px;" width="14" height="15" viewBox="0 0 14 15"><rect x=".5" y=".5" width="13" height="13.5" fill="none" stroke="#c3c3c3"/><rect x="0" y="10" width="14" height="4.5" fill="#c3c3c3"/><path d="M3 3.5H11M3 5.5H11M3 7.5H11" stroke="#c3c3c3" stroke-width=".9"/></svg>
<svg style="left:695px;top:38px;" width="14" height="14" viewBox="0 0 14 14"><path d="M.5 .5H13.5V13.5H.5ZM4.5 .5V13.5M9.5 .5V13.5M.5 4.5H13.5M.5 9.5H13.5" fill="none" stroke="#c3c3c3" stroke-width="1"/></svg>
<svg style="left:724px;top:38px;" width="15" height="14" viewBox="0 0 15 14"><path d="M0 0H14V4H12.3L11.6 2.2H5L9.4 6.8 5 11.8H11.6L12.3 10H14V14H0V12.6L5.6 6.9 0 1.4Z" fill="#858585"/></svg>
<svg style="left:753px;top:38px;" width="14" height="15" viewBox="0 0 14 15"><path d="M0 .5H14M0 11.5H14M0 14.5H14" stroke="#c3c3c3" stroke-width="1"/><circle cx="3.4" cy="5.4" r="3.3" fill="#c3c3c3"/><path d="M9 4.5H14M11.5 2V7M9 8.5H14" stroke="#c3c3c3" stroke-width="1"/></svg>
<svg style="left:782px;top:38px;" width="17" height="14" viewBox="0 0 17 14"><path d="M3.5 5V.5H11L14.5 4V5.5M14.5 10V13.5H3.5V10.5" fill="none" stroke="#cdcdcd" stroke-width="1"/><path d="M10.5 .5V4.5H14.5" fill="none" stroke="#cdcdcd"/><circle cx="6.8" cy="7.8" r="2.8" fill="#c3c3c3"/><circle cx="13.4" cy="7.6" r="2.6" fill="#c3c3c3"/><path d="M8 7.8H12" stroke="#c3c3c3" stroke-width="1.2"/><circle cx="1.2" cy="6.2" r="1.1" fill="#c3c3c3"/><path d="M1.2 6.2L5 7.4" stroke="#c3c3c3" stroke-width="1"/></svg>
<svg style="left:815px;top:38px;" width="15" height="15" viewBox="0 0 15 15"><path d="M0 .4H6.9M2.5 2.4H8.75M6.9 4.5H12.8M7.5 6.5H14M7.5 8.6H14M6.5 10.6H12.8M2.5 12.6H8.75M0 14.5H6.9" stroke="#484848" stroke-width="1.2" fill="none"/><path d="M0 7.5H4.5" stroke="#484848" stroke-width="1.3"/><path d="M3.2 5.3L6.4 7.5 3.2 9.7Z" fill="#484848"/></svg>
<svg style="left:844px;top:38px;" width="16" height="15" viewBox="0 0 16 15"><path d="M5 1.5H14.75M5 4.5H14M5 9.4H14.75M5 12.5H14" stroke="#484848" stroke-width="1.2"/><path d="M.6 1.6L2 .5V5.8" fill="none" stroke="#484848" stroke-width="1.3"/><path d="M.3 9.4Q1.8 7.8 3.2 9 4 10.4 .6 13.4H4.2" fill="none" stroke="#484848" stroke-width="1.2"/></svg>
<svg style="left:889px;top:38px;" width="15" height="16" viewBox="0 0 15 16"><path d="M7.6 13.4H.7V.7H7.8L11.3 4.2V9" fill="none" stroke="#555555" stroke-width="1.3"/><path d="M7.6 .8V4.4H11.2" fill="none" stroke="#555555" stroke-width="1"/><path d="M4 6.6L2.4 8.6 4 10.6M8.2 6.6L9.8 8.6 8.2 10.6M6.8 6.2L5.4 11" fill="none" stroke="#555555" stroke-width="1"/><path d="M9.4 12.5H14.4M11.9 10V15" stroke="#555555" stroke-width="1.3"/></svg>
<svg style="left:918px;top:38px;" width="15" height="15" viewBox="0 0 15 15"><rect x="2.5" y="7.5" width="4" height="4" fill="none" stroke="#c3c3c3" stroke-width="1"/><rect x="0.5" y="9.5" width="4" height="4" fill="#f0f0f0" stroke="#c3c3c3" stroke-width="1"/><rect x="8.5" y="7.5" width="4" height="4" fill="none" stroke="#c3c3c3" stroke-width="1"/><rect x="6.5" y="9.5" width="4" height="4" fill="#f0f0f0" stroke="#c3c3c3" stroke-width="1"/><rect x="5" y="11" width="1" height="1" fill="#c3c3c3"/><rect x="8" y="0" width="6" height="6" fill="#c3c3c3"/></svg>
<svg style="left:946px;top:36px;clip-path:inset(0 0 0 0);" width="16" height="17" viewBox="0 0 16 17"><circle cx="4.6" cy="5" r="4.6" fill="#c3c3c3"/><path d="M5 6.4H15V16H5Z" fill="#c3c3c3"/><circle cx="10" cy="11" r="2.6" fill="#f0f0f0"/></svg>
<svg style="left:1625px;top:7px;" width="18" height="18" viewBox="0 0 18 18"><circle cx="6.8" cy="6.4" r="5.3" fill="none" stroke="#4a4a4a" stroke-width="1.4"/><path d="M10.6 10.4L15.6 15.4" stroke="#4a4a4a" stroke-width="2.4" stroke-linecap="round"/></svg>
<svg style="left:1649px;top:8px;" width="17" height="14" viewBox="0 0 17 14"><path d="M4.4 .6L1 7 4.4 13.4M12.4 .6L15.8 7 12.4 13.4M10 .4L6.6 13.6" fill="none" stroke="#3f74c3" stroke-width="1.6"/></svg>
<svg style="left:1669px;top:7px;" width="16" height="16" viewBox="0 0 16 16"><path d="M0 2.6H16M0 13.4H16M2.6 0V16M13.4 0V16" stroke="#4a4a4a" stroke-width="1.2"/><path d="M5.4 5.5H10.6M5.4 7.5H11.4M5.4 9.5H11.4" stroke="#4a4a4a" stroke-width="1"/></svg>
<svg style="left:1795.5px;top:15px;" width="6" height="4" viewBox="0 0 6 4"><path d="M0 0H6L3 3.2Z" fill="#3a3a3a"/></svg>
<div style="left:1823px;top:11px;width:10px;height:3px;background:#2e2e2e;"></div>
<svg style="left:1850px;top:5px;" width="12" height="10" viewBox="0 0 12 10"><path d="M4 4V1H11V6.4H8" fill="none" stroke="#2e2e2e" stroke-width="1.8"/><rect x="1" y="4.2" width="6.4" height="4.8" fill="#f0f0f0" stroke="#2e2e2e" stroke-width="1.8"/></svg>
<svg style="left:1888px;top:5px;" width="10" height="8" viewBox="0 0 10 8"><path d="M1 .6L9 7.4M9 .6L1 7.4" stroke="#2e2e2e" stroke-width="2.6"/></svg>
<svg style="left:6px;top:62px;" width="8" height="6" viewBox="0 0 8 6"><path d="M3.2 1.3L.6 3.5 3.2 5.7M7.2 1.3L4.6 3.5 7.2 5.7" fill="none" stroke="#a8a8a8" stroke-width="1"/><path d="M3.2 .3L.6 2.5 3.2 4.7M7.2 .3L4.6 2.5 7.2 4.7" fill="none" stroke="#383838" stroke-width="1.3"/></svg>
<svg style="left:1740px;top:37px;" width="8" height="6" viewBox="0 0 8 6"><path d="M3.2 1.3L.6 3.5 3.2 5.7M7.2 1.3L4.6 3.5 7.2 5.7" fill="none" stroke="#a8a8a8" stroke-width="1"/><path d="M3.2 .3L.6 2.5 3.2 4.7M7.2 .3L4.6 2.5 7.2 4.7" fill="none" stroke="#383838" stroke-width="1.3"/></svg>
<svg style="left:1906px;top:62px;" width="8" height="6" viewBox="0 0 8 6"><path d="M3.2 1.3L.6 3.5 3.2 5.7M7.2 1.3L4.6 3.5 7.2 5.7" fill="none" stroke="#a8a8a8" stroke-width="1"/><path d="M3.2 .3L.6 2.5 3.2 4.7M7.2 .3L4.6 2.5 7.2 4.7" fill="none" stroke="#383838" stroke-width="1.3"/></svg>
<svg style="left:1759px;top:36px;" width="7" height="7" viewBox="0 0 7 7"><path d="M.8 .8L6.2 6.2M6.2 .8L.8 6.2" stroke="#333" stroke-width="1.9"/></svg>
<svg style="left:410px;top:76px;" width="10" height="8" viewBox="0 0 10 8"><path d="M0 .5H10M0 2.5H10M0 4.5H10M0 6.5H10" stroke="#4a4a4a" stroke-width="1"/></svg>
<svg style="left:1754px;top:50px;" width="10" height="8" viewBox="0 0 10 8"><path d="M0 .5H10M0 2.5H10M0 4.5H10M0 6.5H10" stroke="#4a4a4a" stroke-width="1"/></svg>
<svg style="left:1755px;top:778px;" width="10" height="8" viewBox="0 0 10 8"><path d="M0 .5H10M0 2.5H10M0 4.5H10M0 6.5H10" stroke="#4a4a4a" stroke-width="1"/></svg>
<svg style="left:528.5px;top:66px;" width="6" height="6" viewBox="0 0 6 6"><path d="M.6 .6L5.4 5.4M5.4 .6L.6 5.4" stroke="#333" stroke-width="1.9"/></svg>
<svg style="left:618.5px;top:66px;" width="6" height="6" viewBox="0 0 6 6"><path d="M.6 .6L5.4 5.4M5.4 .6L.6 5.4" stroke="#333" stroke-width="1.9"/></svg>
<svg style="left:725.5px;top:66px;" width="6" height="6" viewBox="0 0 6 6"><path d="M.6 .6L5.4 5.4M5.4 .6L.6 5.4" stroke="#333" stroke-width="1.9"/></svg>
<svg style="left:838px;top:66px;" width="6" height="6" viewBox="0 0 6 6"><path d="M.6 .6L5.4 5.4M5.4 .6L.6 5.4" stroke="#333" stroke-width="1.9"/></svg>
<svg style="left:949.5px;top:66px;" width="6" height="6" viewBox="0 0 6 6"><path d="M.6 .6L5.4 5.4M5.4 .6L.6 5.4" stroke="#333" stroke-width="1.9"/></svg>
<svg style="left:6px;top:94px;" width="16" height="16" viewBox="0 0 16 16"><path d="M0 0H7.5V5H12.8V7.5L7.5 11V14H0Z" fill="#555555"/><path d="M9 .5L12.5 4H9Z" fill="#555555"/><path d="M9 12.2H15M12 9.2V15.2" stroke="#555555" stroke-width="2.1"/></svg>
<svg style="left:35px;top:94px;" width="16" height="15" viewBox="0 0 16 15"><rect x="0" y="0" width="5" height=".9" fill="#555555"/><path d="M0 2H12.8V5.9L8.1 9.6V11.8H0Z" fill="#555555"/><path d="M8.9 10.9H14.9M11.9 7.9V13.9" stroke="#555555" stroke-width="2.1"/></svg>
<svg style="left:63px;top:93px;" width="17" height="17" viewBox="0 0 17 17"><rect x=".5" y=".5" width="15" height="15" fill="none" stroke="#555555" stroke-dasharray="1 1" stroke-dashoffset=".5"/><rect x="2" y="2.4" width="2.8" height="1.1" fill="#555555"/><rect x="7.3" y="3.1" width="5.7" height="3.5" fill="#555555"/><rect x="2.3" y="9.2" width="4.4" height="3.3" fill="#555555"/><rect x="9" y="9" width="8" height="8" fill="#f0f0f0"/><path d="M9.9 13.1H15.9M12.9 10.1V16.1" stroke="#555555" stroke-width="2.1"/></svg>
<svg style="left:97px;top:94px;" width="14" height="14" viewBox="0 0 14 14"><path d="M0 0H11L14 3V14H0Z" fill="#555555"/><rect x="2.4" y="6.8" width="9.3" height="5.3" fill="#f0f0f0"/><rect x="3.6" y="0" width="6.9" height="4.3" fill="#f0f0f0"/><rect x="7.4" y=".6" width="1.3" height="2" fill="#555555"/></svg>
<svg style="left:128px;top:94px;" width="11" height="14" viewBox="0 0 11 14"><rect x="0" y="2.1" width="11" height="1.7" fill="#c3c3c3"/><path d="M3.4 2.2V.6H7.8V2.2" fill="none" stroke="#c3c3c3" stroke-width="1.2"/><path d="M1 4.4H10L9.7 14H1.3Z" fill="#c3c3c3"/><path d="M4 5.4V13M7 5.4V13" stroke="#dedede" stroke-width=".9"/></svg>
<svg style="left:155px;top:94px;" width="16" height="16" viewBox="0 0 16 16"><path d="M.75 10.4V2.2Q.75 .75 2.2 .75H8.6V5" fill="none" stroke="#555555" stroke-width="1.5"/><path d="M.4 3H6.6V11H.4Z" fill="#555555"/><circle cx="10.3" cy="10.4" r="5.4" fill="#f0f0f0"/><path d="M6.7 9.4A3.8 3.8 0 0 1 13.2 7.9M13.9 11.4A3.8 3.8 0 0 1 7.4 12.9" fill="none" stroke="#555555" stroke-width="1.6"/><path d="M11.4 8.9L14.9 8.9 14.9 5.4Z" fill="#555555"/><path d="M9.2 11.9L5.7 11.9 5.7 15.4Z" fill="#555555"/></svg>
<svg style="left:190px;top:94px;" width="10" height="13" viewBox="0 0 10 13"><path d="M5 0L9.8 6H6.9V12.8H3V6H.1Z" fill="#c3c3c3"/></svg>
<svg style="left:219px;top:95px;" width="10" height="13" viewBox="0 0 10 13"><path d="M5 13L9.8 7.4H6.9V0H3.4V7.4H.1Z" fill="#c3c3c3"/></svg>
<svg style="left:246px;top:96px;" width="13" height="10" viewBox="0 0 13 10"><path d="M0 4.9L6 0V2.9H13V7H6V9.8Z" fill="#c3c3c3"/></svg>
<svg style="left:276px;top:96px;" width="13" height="10" viewBox="0 0 13 10"><path d="M13 4.9L7 0V2.9H0V7H7V9.8Z" fill="#c3c3c3"/></svg>
<svg style="left:308px;top:94px;" width="14" height="13" viewBox="0 0 14 13"><rect x=".5" y=".5" width="10" height="2.9" fill="#ababab" stroke="#555555" stroke-width="1"/><path d="M0 6.5H14M0 9.5H14M0 12.5H14" stroke="#555555" stroke-width="1.15"/></svg>
<svg style="left:337px;top:94px;" width="15" height="15" viewBox="0 0 15 15"><circle cx="8.6" cy="5.2" r="4.35" fill="none" stroke="#555555" stroke-width="1.3"/><path d="M5.2 8.8L1.1 12.9" stroke="#555555" stroke-width="2.3" stroke-linecap="round"/></svg>
<div style="left:14px;top:125px;width:12px;height:1px;background:repeating-linear-gradient(90deg,#888 0 1px,transparent 1px 2px);"></div>
<div style="left:27.5px;top:117.4px;width:11.1px;height:13.1px;background:linear-gradient(#bcbcbc,#828282);border:1px solid #6e6e6e;border-radius:1px 0 0 1px;"></div>
<svg style="left:27px;top:117px;" width="12" height="14" viewBox="0 0 12 14"><path d="M2.2 .6V13.4" stroke="#5a5a5a" stroke-width="1.1"/><rect x="4.2" y="3.2" width="5.4" height="3.5" fill="#f6f6f6"/></svg>
<svg style="left:972px;top:68px;" width="16" height="18" viewBox="0 0 16 18"><circle cx="9.4" cy="7.6" r="5" fill="none" stroke="#555" stroke-width="1.1"/><path d="M5.8 11.2L1.2 15.6" stroke="#555" stroke-width="1.1"/></svg>
<svg style="left:1745px;top:73px;" width="14" height="10" viewBox="0 0 14 10"><path d="M4.6 .7H13.2V8.8H4.6L.8 4.75Z" fill="none" stroke="#111" stroke-width="1.3"/><path d="M7 3L10.4 6.4M10.4 3L7 6.4" stroke="#111" stroke-width="1.3"/></svg>
<svg style="left:971px;top:100px;" width="7" height="6" viewBox="0 0 7 6"><path d="M7 0V6H0Z" fill="#404040"/></svg>
<svg style="left:993px;top:127px;" width="6" height="9" viewBox="0 0 6 9"><path d="M.6 .6L4.6 4.2 .6 7.8" fill="none" stroke="#c4c4c4" stroke-width="1"/><path d="M.6 .4V8" stroke="#a4a4a4" stroke-width="1.1"/></svg>
<div style="left:1748px;top:132px;width:3px;height:3px;background:#111;border-radius:50%;"></div>
<div style="left:1753px;top:132px;width:3px;height:3px;background:#111;border-radius:50%;"></div>
<div style="left:1758px;top:132px;width:3px;height:3px;background:#111;border-radius:50%;"></div>
<svg style="left:621.5px;top:804.6px;" width="9" height="6" viewBox="0 0 9 6"><path d="M.5 .6L4.5 4.6 8.5 .6" fill="none" stroke="#444" stroke-width="1.15"/></svg>
<svg style="left:930px;top:799px;" width="15" height="16" viewBox="0 0 15 16"><circle cx="8.8" cy="6.1" r="4.6" fill="none" stroke="#222" stroke-width="1.3"/><path d="M5.4 9.6L1.4 13.8" stroke="#222" stroke-width="2.2"/></svg>
<svg style="left:441.5px;top:757.5px;" width="6" height="9" viewBox="0 0 6 9"><path d="M5 .6L1 4.4 5 8.2" fill="none" stroke="#c9c9c9" stroke-width="1.1"/></svg>
<svg style="left:1757.5px;top:1026.3px;" width="9" height="6" viewBox="0 0 9 6"><path d="M.5 .6L4.5 4.6 8.5 .6" fill="none" stroke="#444" stroke-width="1.15"/></svg>
<svg style="left:1883.5px;top:1026.3px;" width="9" height="6" viewBox="0 0 9 6"><path d="M.5 .6L4.5 4.6 8.5 .6" fill="none" stroke="#444" stroke-width="1.15"/></svg>
<svg style="left:1541px;top:1021px;" width="15" height="13" viewBox="0 0 15 13"><path d="M0 .4L6 6.4 0 12.4Z" fill="#555"/><path d="M7 .8H14.4V9.4L10.7 12.6 7 9.4Z" fill="#555"/><path d="M9.4 2.6H12M9.4 8.8H12M10.7 2.6V8.8" stroke="#f0f0f0" stroke-width="1"/></svg>
<svg style="left:1784px;top:85px;" width="19" height="19" viewBox="0 0 19 19"><rect x="2.5" y="11.5" width="5" height="5" fill="none" stroke="#555555" stroke-width="1"/><rect x="0.5" y="13.5" width="5" height="5" fill="#f0f0f0" stroke="#555555" stroke-width="1"/><rect x="9.5" y="11.5" width="5" height="5" fill="none" stroke="#555555" stroke-width="1"/><rect x="7.5" y="13.5" width="5" height="5" fill="#f0f0f0" stroke="#555555" stroke-width="1"/><rect x="6" y="16" width="1" height="1" fill="#555555"/><path d="M14.5 0V10M17.5 0V13.6M18 .5H11" fill="none" stroke="#555555" stroke-width="1"/><path d="M14.4 0H11.2A3.4 3.4 0 0 0 11.2 6.8H14.4Z" fill="#555555"/></svg>
<svg style="left:1784px;top:113px;" width="19" height="19" viewBox="0 0 19 19"><rect x="2.5" y="11.5" width="5" height="5" fill="none" stroke="#555555" stroke-width="1"/><rect x="0.5" y="13.5" width="5" height="5" fill="#f0f0f0" stroke="#555555" stroke-width="1"/><rect x="9.5" y="11.5" width="5" height="5" fill="none" stroke="#555555" stroke-width="1"/><rect x="7.5" y="13.5" width="5" height="5" fill="#f0f0f0" stroke="#555555" stroke-width="1"/><rect x="6" y="16" width="1" height="1" fill="#555555"/><path d="M11.3 9.2L14.65 .6 18 9.2M12.4 6.3H16.9" fill="none" stroke="#555555" stroke-width="2.2" stroke-linejoin="bevel"/></svg>
<svg style="left:1785px;top:141px;" width="19" height="19" viewBox="0 0 19 19"><path d="M0 1H13V5H11.4V3.2H8.4V11H10V13H3V11H5V3.2H1.6V5H0Z" fill="#555555"/><path d="M12.4 9.7H18.4M15.4 6.7V12.7" stroke="#555555" stroke-width="2"/><path d="M0 16L1.9 18 3.8 16 5.7 18 7.6 16 9.5 18 11.4 16 13.3 18 15.2 16 17 18" fill="none" stroke="#555555" stroke-width="1.4"/></svg>
<svg style="left:1784px;top:169px;" width="19" height="19" viewBox="0 0 19 19"><rect x="2.5" y="11.5" width="5" height="5" fill="none" stroke="#555555" stroke-width="1"/><rect x="0.5" y="13.5" width="5" height="5" fill="#f0f0f0" stroke="#555555" stroke-width="1"/><rect x="9.5" y="11.5" width="5" height="5" fill="none" stroke="#555555" stroke-width="1"/><rect x="7.5" y="13.5" width="5" height="5" fill="#f0f0f0" stroke="#555555" stroke-width="1"/><rect x="6" y="16" width="1" height="1" fill="#555555"/><rect x="9.7" y=".6" width="8.6" height="8.4" fill="#a8a8a8" stroke="#676767" stroke-width="1"/></svg>
<svg style="left:1784px;top:210px;" width="18" height="18" viewBox="0 0 18 18"><path d="M2 2H17V16.7H2Z" fill="#555555"/><circle cx="4.3" cy="4.1" r="5.3" fill="#f0f0f0"/><circle cx="4.3" cy="4.1" r="4" fill="#555555"/><circle cx="9.3" cy="8.5" r="4.2" fill="#f0f0f0"/></svg>
<svg style="left:1784px;top:251px;" width="19" height="19" viewBox="0 0 19 19"><rect x="2.5" y="11.5" width="5" height="5" fill="none" stroke="#555555" stroke-width="1"/><rect x="0.5" y="13.5" width="5" height="5" fill="#f0f0f0" stroke="#555555" stroke-width="1"/><rect x="9.5" y="11.5" width="5" height="5" fill="none" stroke="#555555" stroke-width="1"/><rect x="7.5" y="13.5" width="5" height="5" fill="#f0f0f0" stroke="#555555" stroke-width="1"/><rect x="6" y="16" width="1" height="1" fill="#555555"/><path d="M8.4 10.6L16.4 2.4M15.6 10.6L7.6 2.4" stroke="#555555" stroke-width="2"/><path d="M5.6 0H10.8L5.6 5.2Z" fill="#555555"/><path d="M18.4 0H13.2L18.4 5.2Z" fill="#555555"/></svg>
<svg style="left:1786px;top:294px;" width="18" height="17" viewBox="0 0 18 17"><path d="M8.6 14.4H.7V.7H8.8L12.6 4.5V8" fill="none" stroke="#464646" stroke-width="1.3"/><path d="M8.8 .8V4.6H12.6" fill="none" stroke="#464646" stroke-width="1.1"/><path d="M2.6 5.6L4.2 7.2 7 4M2.6 10L4.2 11.6 7 8.4" fill="none" stroke="#464646" stroke-width="1.5"/><path d="M8.2 15.6L9.2 12.6 14.4 7.4 16.8 9.8 11.6 15Z" fill="#464646"/></svg>
<svg style="left:1786px;top:321px;" width="18" height="20" viewBox="0 0 18 20"><path d="M0 1.2H13V4.6H11.5V3H8.2V11.2H9.4V12.8H3.4V11.2H5V3H1.5V4.6H0Z" fill="#555555"/><circle cx="12.4" cy="10" r="3.7" fill="#f0f0f0" stroke="#555555" stroke-width="1.1"/><path d="M9.6 12.8L4 18.4" stroke="#555555" stroke-width="2"/></svg>
<svg style="left:1786px;top:347px;" width="16" height="17" viewBox="0 0 16 17"><path d="M.95 6.6V15H14.05V6.6" fill="none" stroke="#555555" stroke-width="1.9"/><path d="M7.5 11.4V5" stroke="#555555" stroke-width="2.7"/><path d="M3.6 6.2L7.5 1.8 11.4 6.2Z" fill="#555555"/></svg>
<svg style="left:1785px;top:389px;" width="18" height="18" viewBox="0 0 18 18"><path d="M1.2 16.4L15.2 2.6M16.8 16.4L2.8 2.6" stroke="#555555" stroke-width="2"/><path d="M0 .4H6.6L0 7Z" fill="#555555"/><path d="M18 .4H11.4L18 7Z" fill="#555555"/></svg>
</body></html>
